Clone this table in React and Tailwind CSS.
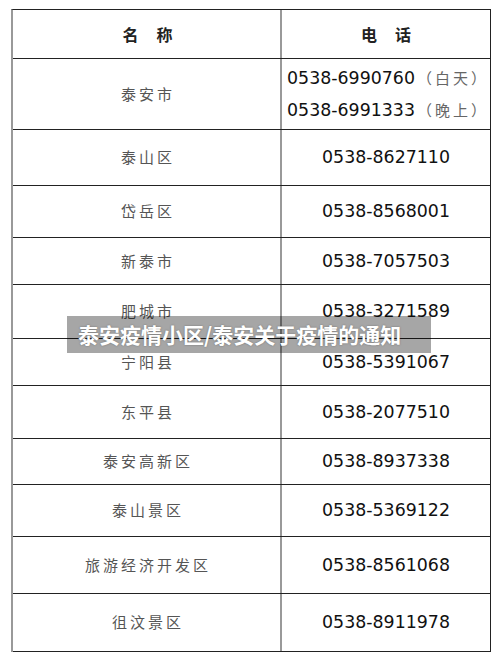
const ROWS = [
  { name: "泰山区", phone: "0538-8627110", h: "h-[56px]" },
  { name: "岱岳区", phone: "0538-8568001", h: "h-[52px]" },
  { name: "新泰市", phone: "0538-7057503", h: "h-[47px]" },
  { name: "肥城市", phone: "0538-3271589", h: "h-[54px]" },
  { name: "宁阳县", phone: "0538-5391067", h: "h-[47px]" },
  { name: "东平县", phone: "0538-2077510", h: "h-[53px]" },
  { name: "泰安高新区", phone: "0538-8937338", h: "h-[46px]" },
  { name: "泰山景区", phone: "0538-5369122", h: "h-[52px]" },
  { name: "旅游经济开发区", phone: "0538-8561068", h: "h-[57px]" },
  { name: "徂汶景区", phone: "0538-8911978", h: "h-[58px]" },
];

const cjk = "font-['Noto_Sans_CJK_SC',sans-serif]";
const num = "font-['DejaVu_Sans','Noto_Sans_CJK_SC',sans-serif]";

const Row = ({ h, left, right }) => (
  <div className={`flex border-b border-[#222] ${h}`}>
    <div className="flex w-[269px] items-center justify-center border-r-2 border-[#999]">{left}</div>
    <div className="flex flex-1 items-center justify-center">{right}</div>
  </div>
);

const Name = ({ children }) => (
  <span className={`${cjk} pl-[3px] text-[15px] tracking-[3px] text-[#555]`}>{children}</span>
);

const Phone = ({ children }) => <span className={`${num} text-[17.4px] text-[#111]`}>{children}</span>;

const Note = ({ children }) => (
  <span className={`${cjk} ml-[2px] text-[15px] tracking-[3px] text-[#666]`}>{children}</span>
);

export default function App() {
  return (
    <div className="relative h-[670px] w-[500px] overflow-hidden bg-white">
      <div className="ml-[11px] mt-[9px] w-[480px] border-t border-r border-l-2 border-[#222] border-l-[#999]">
        <Row
          h="h-[49px]"
          left={<span className={`${cjk} pl-[2px] text-[16px] font-bold text-[#222]`}>名&nbsp;&nbsp;&nbsp;&nbsp;&nbsp;称</span>}
          right={<span className={`${cjk} text-[16px] font-bold text-[#222]`}>电&nbsp;&nbsp;&nbsp;&nbsp;&nbsp;话</span>}
        />
        <Row
          h="h-[71px]"
          left={<Name>泰安市</Name>}
          right={
            <div className="flex flex-col items-start gap-[6px] pl-[4px]">
              <div className="flex items-center">
                <Phone>0538-6990760</Phone>
                <Note>（白天）</Note>
              </div>
              <div className="flex items-center">
                <Phone>0538-6991333</Phone>
                <Note>（晚上）</Note>
              </div>
            </div>
          }
        />
        {ROWS.map((r) => (
          <Row key={r.name} h={r.h} left={<Name>{r.name}</Name>} right={<Phone>{r.phone}</Phone>} />
        ))}
      </div>

      <div className="absolute left-[67px] top-[316px] flex h-[37px] w-[364px] items-center bg-black/35 pl-[11px]">
        <span className={`${cjk} text-[21px] font-bold leading-none text-white [text-shadow:0_0_2px_rgba(0,0,0,0.35)]`}>
          泰安疫情小区/泰安关于疫情的通知
        </span>
      </div>
    </div>
  );
}
